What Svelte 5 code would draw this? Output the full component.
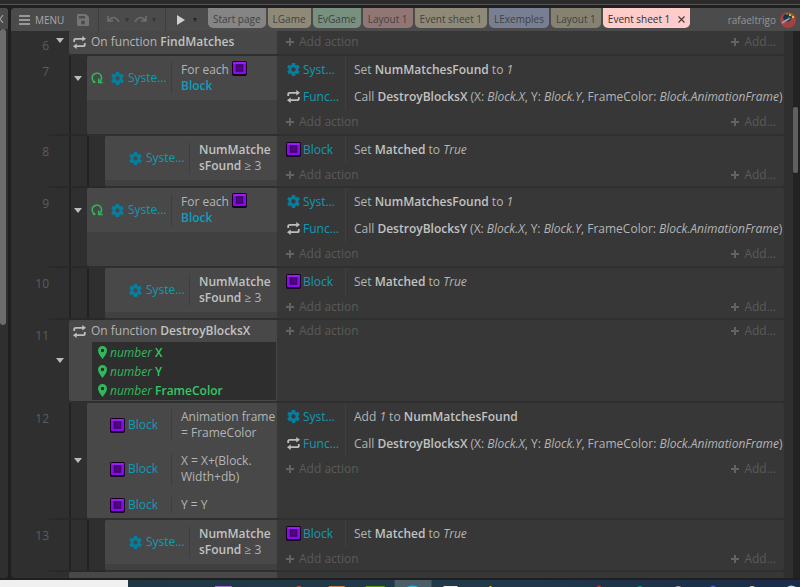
<script>
  const call = (fn) => [
    { t: 'Call ' }, { t: fn, k: 'b' }, { t: ' (X: ' }, { t: 'Block.X', k: 'i' }, { t: ', Y: ' },
    { t: 'Block.Y', k: 'i' }, { t: ', FrameColor: ' }, { t: 'Block.AnimationFrame', k: 'i' }, { t: ')' }
  ];
  const setFound = { icon: 'gear', name: 'Syst…', text: [{ t: 'Set ' }, { t: 'NumMatchesFound', k: 'b' }, { t: ' to ' }, { t: '1', k: 'i' }] };
  const addFound = { icon: 'gear', name: 'Syst…', text: [{ t: 'Add ' }, { t: '1', k: 'i' }, { t: ' to ' }, { t: 'NumMatchesFound', k: 'b' }] };
  const setMatched = { icon: 'block', name: 'Block', text: [{ t: 'Set ' }, { t: 'Matched', k: 'b' }, { t: ' to ' }, { t: 'True', k: 'i' }] };
  const callFn = (fn) => ({ icon: 'swap', name: 'Func…', text: call(fn) });
  const forEach = { icon: 'gear', name: 'Syste…', loop: true, lines: [[{ t: 'For each ' }, { k: 'block' }], [{ t: 'Block', k: 'obj' }]] };
  const found3 = { icon: 'gear', name: 'Syste…', lines: [[{ t: 'NumMatche', k: 'b' }], [{ t: 'sFound', k: 'b' }, { t: ' ≥ 3' }]] };
  const blockIs = (...lines) => ({ icon: 'block', name: 'Block', lines: lines.map((t) => [{ t }]) });

  const events = [
    { n: 6, level: 0, fn: 'FindMatches', open: true, cls: 'first' },
    { n: 7, level: 1, open: true, cls: 'short', conds: [forEach], acts: [setFound, callFn('DestroyBlocksX')] },
    { n: 8, level: 2, conds: [found3], acts: [setMatched] },
    { n: 9, level: 1, open: true, cls: 'short', conds: [forEach], acts: [setFound, callFn('DestroyBlocksY')] },
    { n: 10, level: 2, conds: [found3], acts: [setMatched] },
    { n: 11, level: 0, fn: 'DestroyBlocksX', open: true, params: ['X', 'Y', 'FrameColor'] },
    {
      n: 12, level: 1, open: true, cls: 'tall',
      conds: [blockIs('Animation frame', '= FrameColor'), blockIs('X = X+(Block.', 'Width+db)'), blockIs('Y = Y')],
      acts: [addFound, callFn('DestroyBlocksX')]
    },
    { n: 13, level: 2, conds: [found3], acts: [setMatched] }
  ];

  const tabs = [
    { t: 'Start page', c: 'grey' }, { t: 'LGame', c: 'olive' }, { t: 'EvGame', c: 'green' },
    { t: 'Layout 1', c: 'rose' }, { t: 'Event sheet 1', c: 'olive' }, { t: 'LExemples', c: 'blue' },
    { t: 'Layout 1', c: 'khaki' }, { t: 'Event sheet 1', c: 'active' }
  ];
</script>

{#snippet icon(kind)}
  {#if kind === 'gear'}
    <svg class="ic" viewBox="0 0 24 24"><path fill="#067f9e" fill-rule="evenodd" d="M9 0h6l.6 3.600 1.600.9L20.700 3.300l2.900 5-2.800 2.400v2.600l2.800 2.400-2.900 5-3.500-1.200-1.600.9L15 24H9l-.6-3.600-1.600-.9-3.500 1.200-2.900-5 2.800-2.400v-2.600L.4 8.300l2.900-5 3.500 1.200 1.600-.9zM12 8a4 4 0 1 0 0 8 4 4 0 0 0 0-8z" /></svg>
  {:else if kind === 'swap'}
    <svg class="ic" viewBox="0 0 13 13" fill="none" stroke="#bdbdbd" stroke-width="1.8"><path d="M1.200 6V4.500q0-1.700 1.700-1.700H10M11.800 7v1.500q0 1.700-1.700 1.700H3" /><path fill="#bdbdbd" stroke="none" d="M9.300 0 13 2.800 9.300 5.600zM3.700 7.400 0 10.200 3.700 13z" /></svg>
  {:else}
    <svg class="blk" viewBox="0 0 15 15"><rect width="15" height="15" rx="2" fill="#160122" /><rect x="1" y="1" width="13" height="12" rx="1" fill="#8a0be8" /><rect x="1" y="1" width="13" height="2" rx="1" fill="#9c1cf8" /><rect x="3.500" y="3" width="8" height="8" fill="#6707b0" /><rect x="4" y="3.500" width="7" height="7" fill="#37045f" /><rect x="5" y="4.500" width="5" height="5" fill="#4f0586" /></svg>
  {/if}
{/snippet}

{#snippet rich(parts)}
  {#each parts as p}{#if p.k === 'b'}<b>{p.t}</b>{:else if p.k === 'i'}<i>{p.t}</i>{:else if p.k === 'obj'}<b class="obj">{p.t}</b>{:else if p.k === 'block'}{@render icon('block')}{:else}{p.t}{/if}{/each}
{/snippet}

<div class="app">
  <div class="frame"></div>
  <div class="body">
    <aside><div class="side-head"><svg viewBox="0 0 4 8"><path d="M-3 0l6 8M3 0l-6 8" fill="none" stroke="#999" stroke-width="1.300" /></svg></div><div class="side-thumb"></div></aside>
    <main>
      <header>
        <button class="menu"><svg width="11" height="10" viewBox="0 0 11 10"><path d="M0 1h11M0 5h11M0 9h11" stroke="#b2b2b2" stroke-width="1.400" /></svg>MENU</button>
        <button class="save" aria-label="Save"><svg width="12" height="12" viewBox="0 0 12 12"><path fill="#747474" fill-rule="evenodd" d="M1 0h8l3 3v8q0 1-1 1H1q-1 0-1-1V1q0-1 1-1zM2 2v2.500h6V2zM6 6.500a2 2 0 1 0 0 4 2 2 0 0 0 0-4z" /></svg></button>
        <div class="group">
          <button aria-label="Undo"><svg width="13" height="9" viewBox="0 0 13 9"><path d="M1 1v5h5M1.500 5.500Q8-1 12 7" fill="none" stroke="#707070" stroke-width="1.500" /></svg></button>
          <button class="caret dim" aria-label="Undo history"></button>
          <button aria-label="Redo"><svg width="13" height="9" viewBox="0 0 13 9"><path d="M12 1v5H7M11.500 5.500Q5-1 1 7" fill="none" stroke="#707070" stroke-width="1.500" /></svg></button>
          <button class="caret dim" aria-label="Redo history"></button>
        </div>
        <div class="group play">
          <button aria-label="Preview"><svg width="8" height="10" viewBox="0 0 8 10"><path d="M0 0l8 5-8 5z" fill="#cfcfcf" /></svg></button>
          <button class="caret" aria-label="Preview options"></button>
        </div>
        <nav>
          {#each tabs as tab}
            <button class="tab {tab.c}">{tab.t}{#if tab.c === 'active'}<svg width="7" height="7" viewBox="0 0 7 7"><path d="M.5.5l6 6M6.500.5l-6 6" stroke="#4c3c3c" stroke-width="1.200" /></svg>{/if}</button>
          {/each}
        </nav>
        <a class="user" href="#account">rafaeltrigo
          <svg width="16" height="16" viewBox="0 0 16 16"><circle cx="8" cy="8" r="8" fill="#a5413f" /><path d="M3 6q1-5 6-4l3 3-2 4-4 1z" fill="#1e3342" /><path d="M2 11l8-5" stroke="#8da3b5" stroke-width="2" /><circle cx="7" cy="2" r="1" fill="#37a947" /><circle cx="10" cy="3" r="1.200" fill="#d6c62b" /><circle cx="13" cy="5" r="1.200" fill="#d6c62b" /><circle cx="9" cy="6" r="1" fill="#3677b0" /></svg>
        </a>
      </header>
      <div class="scroller">
        <div class="sheet">
          {#each events as e}
            <section class="event l{e.level} {e.cls ?? ''}">
              <div class="num">{e.n}</div>
              <div class="tree">
                {#if e.open}<button class="fold" aria-label="Collapse event {e.n}"></button>{/if}
              </div>
              <div class="conds">
                {#if e.fn}
                  <div class="fn">{@render icon('swap')}<span>On function <b>{e.fn}</b></span></div>
                  {#if e.params}
                    <div class="params">
                      {#each e.params as p}
                        <div><svg width="9" height="13" viewBox="0 0 9 13"><path fill="#31b85c" fill-rule="evenodd" d="M4.500 0a4.500 4.500 0 0 1 4.500 4.500Q9 7.500 4.500 13 0 7.500 0 4.500A4.500 4.500 0 0 1 4.500 0zm0 2.800a1.700 1.700 0 1 0 0 3.400 1.700 1.700 0 0 0 0-3.400z" /></svg><span><i>number</i> <b>{p}</b></span></div>
                      {/each}
                    </div>
                  {/if}
                {:else}
                  {#each e.conds as c}
                    <div class="cond">
                      <div class="who">
                        {#if c.loop}<svg class="loop" viewBox="0 0 12 12"><path d="M4.500 10.300H1.800M3.700 10a4.700 4.700 0 1 1 4.800-.3" fill="none" stroke="#31b85c" stroke-width="1.500" /><path d="M7.700 6.500v4h4" fill="none" stroke="#31b85c" stroke-width="1.500" /></svg>{/if}
                        {@render icon(c.icon)}<span>{c.name}</span>
                      </div>
                      <div class="what">{#each c.lines as l}<div>{@render rich(l)}</div>{/each}</div>
                    </div>
                  {/each}
                {/if}
              </div>
              <div class="acts">
                {#each e.acts ?? [] as a}
                  <div class="act"><div class="obj-name">{@render icon(a.icon)}<span>{a.name}</span></div><div class="desc">{@render rich(a.text)}</div></div>
                {/each}
                <div class="add"><button><span class="plus"></span>Add action</button><button><span class="plus"></span>Add…</button></div>
              </div>
            </section>
          {/each}
          <section class="event l0 cut"><div class="num"></div><div class="tree"></div><div class="conds"></div><div class="acts"></div></section>
        </div>
        <div class="track"><div class="thumb"></div></div>
      </div>
    </main>
  </div>
  <footer>
    <div class="search"></div>
    <svg viewBox="0 0 673 7" preserveAspectRatio="none">
      <rect x="267" width="37" height="7" fill="#4c5e68" />
      <path d="M87 6h17v1H87z" fill="#a774dc" /><path d="M168 7q4-2 6 0z" fill="#d14c4c" /><path d="M201 6h16v1h-16z" fill="#d9824a" /><path d="M238 6h19v1h-19z" fill="#639414" /><path d="M279 7q6-3 12 0z" fill="#26b7d4" /><path d="M316 6h14v1h-14z" fill="#eee" /><path d="M362 6h2v1h-2z" fill="#e4c82e" /><path d="M469 7q3-3 5 0z" fill="#d32f2f" /><path d="M510 7q3-2 5 0z" fill="#159688" /><path d="M548 7q3-2 6 0z" fill="#aaa" /><path d="M583 7q3-3 6 0z" fill="#5059c9" /><path d="M622 7q3-2 6 0z" fill="#ded2b0" /><path d="M660 7q4-3 9 0z" fill="#c5d6ec" />
    </svg>
  </footer>
</div>

<style>
  :global(body) { background: #202020; }
  .app { height: 100vh; min-height: 400px; display: flex; flex-direction: column; overflow: hidden; background: #1f1f1f; color: #b4b4b4; font: 12px/16px "Open Sans", "Noto Sans", sans-serif; }
  button { border: 0; padding: 0; margin: 0; background: none; color: inherit; font: inherit; display: flex; align-items: center; }
  svg { flex: none; display: block; }
  b { font-weight: 650; color: #c2c2c2; }
  .frame { height: 8px; flex: none; box-sizing: border-box; background: linear-gradient(#2b2b2b 4px, #555 4px, #555 5px, #202020 5px); }
  .body { flex: 1; min-height: 0; display: flex; gap: 3px; padding-bottom: 2px; }
  aside { width: 8px; flex: none; background: #2f2f2f; border-radius: 0 3px 3px 0; overflow: hidden; }
  .side-head { height: 21px; background: #4a4a4a; display: flex; align-items: center; }
  .side-head svg { width: 4px; height: 8px; }
  .side-thumb { width: 6px; height: 52%; background: #6c6c6c; border-radius: 3px; }
  main { flex: 1; min-width: 0; display: flex; flex-direction: column; border-radius: 4px 0 0 4px; overflow: hidden; background: #2f2f2f; }
  header { height: 23px; flex: none; display: flex; background: #4b4b4b; font-size: 10px; }
  .menu { margin-left: 8px; gap: 5px; width: 55px; color: #a8a8a8; white-space: nowrap; }
  .save { width: 24px; padding-left: 3px; }
  .group { display: flex; align-items: center; gap: 5px; width: 58px; padding-left: 8px; border-left: 1px solid #3e3e3e; }
  .play { width: 31px; padding-left: 11px; gap: 8px; }
  .caret { width: 0; height: 0; border: 2px solid transparent; border-top: 4px solid #262626; border-bottom: 0; }
  .caret.dim { border-top-color: #363636; }
  nav { display: flex; align-items: flex-start; gap: 2px; flex: 1; min-width: 0; }
  .tab { height: 20px; padding: 2px 5px 0; border-radius: 0 0 5px 5px; color: #414141; white-space: nowrap; justify-content: center; }
  .grey { background: #858585; } .olive { background: #8f8a78; } .green { background: #789080; }
  .rose { background: #917676; } .blue { background: #787f93; } .khaki { background: #858271; }
  .active { background: #ffcccb; color: #303030; gap: 8px; }
  .user { display: flex; align-items: center; gap: 4px; color: #969696; text-decoration: none; margin-right: 4px; }
  .scroller { flex: 1; min-height: 0; display: flex; }
  .sheet { flex: 1; min-width: 0; overflow: hidden; }
  .event { display: flex; min-height: 50px; margin-bottom: 2px; }
  .num { width: 38px; flex: none; text-align: right; padding-top: 8px; color: #5c5c5c; }
  .tree { flex: none; width: 20px; display: flex; align-items: center; justify-content: flex-end; box-sizing: border-box; padding-right: 5px; }
  .l1 .tree { width: 38px; background: linear-gradient(90deg, transparent 20px, #222 20px, #222 22px, transparent 22px); }
  .l2 .tree { width: 56px; background: linear-gradient(90deg, transparent 20px, #222 20px, #222 22px, transparent 22px, transparent 38px, #222 38px, #222 40px, transparent 40px); }
  .l1 .tree, .l2 .tree { box-shadow: 0 2px 0 #292929; }
  .short .tree { padding-bottom: 34px; }
  .fold { width: 0; height: 0; border: 4px solid transparent; border-top: 5px solid #bcbcbc; border-bottom: 0; }
  .conds { flex: none; width: 208px; background: #404040; border-radius: 2px 0 0 2px; overflow: hidden; }
  .l1 .conds { width: 190px; } .l2 .conds { width: 172px; }
  .cond { display: flex; background: #484848; padding: 6px 0; }
  .tall .cond:last-child { padding-bottom: 5px; }
  .who { width: 85px; flex: none; box-sizing: border-box; display: flex; align-items: center; gap: 4px; padding-left: 24px; color: #109bb3; border-right: 1px solid #3e3e3e; white-space: nowrap; }
  .loop { width: 12px; height: 12px; margin-left: -20px; margin-right: 4px; }
  .what { padding-left: 9px; white-space: nowrap; }
  .ic { width: 13px; height: 13px; }
  .blk { width: 15px; height: 15px; }
  .who .blk { margin: 0 -1px; }
  .what .blk { display: inline-block; vertical-align: -2px; margin-top: -2px; }
  .obj { color: #0b9fbf; }
  .fn { display: flex; gap: 5px; align-items: center; height: 22px; padding-left: 4px; }
  .l0 .conds { background: #484848; }
  .params { margin: 0 1px 1px 23px; padding-top: 1px; background: #2e2e2e; color: #31b85c; }
  .params b { color: #35c765; }
  .params > div { display: flex; align-items: center; gap: 3px; padding-left: 6px; height: 19px; }
  .acts { flex: 1; min-width: 0; background: #373737; border-radius: 0 2px 2px 0; }
  .act { display: flex; height: 27px; align-items: center; white-space: nowrap; }
  .obj-name { display: flex; align-items: center; gap: 3px; width: 69px; height: 27px; flex: none; box-sizing: border-box; padding-left: 10px; color: #109bb3; border-right: 1px solid #404040; }
  .obj-name .blk { margin: 0 -1px; }
  .desc { padding-left: 8px; }
  .add { display: flex; justify-content: space-between; height: 24px; align-items: center; padding: 0 8px 0 9px; color: #5a5a5a; white-space: nowrap; }
  .l2 .add { height: 23px; }
  .add button { gap: 5px; }
  .plus { width: 8px; height: 8px; background: linear-gradient(#636363, #636363) center / 8px 2px no-repeat, linear-gradient(#636363, #636363) center / 2px 8px no-repeat; }
  .first { min-height: 22px; }
  .first .num { padding-top: 7px; }
  .first .tree { align-items: flex-start; padding-top: 7px; }
  .l0 .add { height: 22px; }
  .cut { min-height: 20px; }
  .track { width: 16px; flex: none; box-sizing: border-box; padding: 76px 2px 0 9px; background: linear-gradient(90deg, #2f2f2f 9px, #222 9px); }
  .thumb { height: 66px; background: #606060; border-radius: 2px; }
  footer { height: 7px; flex: none; display: flex; background: linear-gradient(90deg, #203640, #21394a 60%, #1c2c49); }
  .search { width: 16%; flex: none; background: #f0f0f0; }
  footer svg { flex: 1; height: 7px; min-width: 0; }
</style>
